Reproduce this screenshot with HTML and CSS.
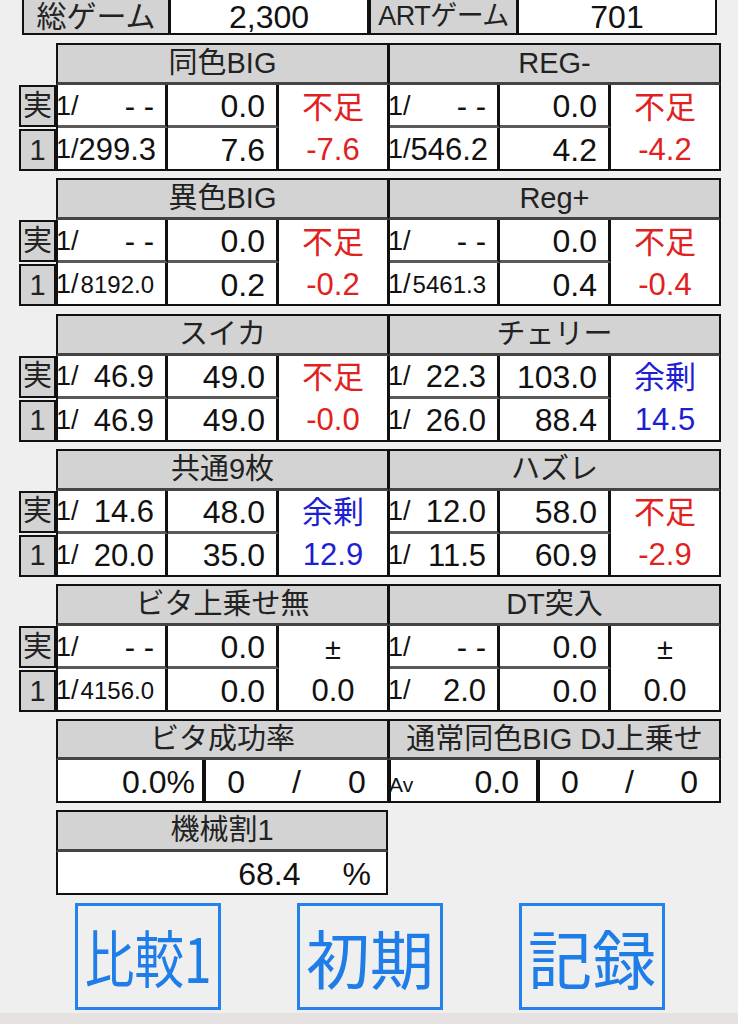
FILE: index.html
```html
<!DOCTYPE html>
<html lang="ja">
<head>
<meta charset="utf-8">
<title>データ</title>
<link rel="stylesheet" href="styles.css">
</head>
<body>
<div class="page">
  <div class="top">
    <div class="lab l1">総ゲーム</div>
    <div class="val v1">2,300</div>
    <div class="lab l2">ARTゲーム</div>
    <div class="val v2">701</div>
  </div>

  <div class="blocks">
    <section class="blk">
      <div class="hrow"><div class="hdr">同色BIG</div><div class="hdr">REG-</div></div>
      <div class="body">
        <div class="side"><div class="sc">実</div><div class="sc">1</div></div>
        <div class="half">
          <div class="c1 r1"><span class="p">1/</span><span class="v">- -</span></div>
          <div class="c2 r1">0.0</div>
          <div class="c3 red"><span>不足</span><span>-7.6</span></div>
          <div class="c1"><span class="p">1/</span><span class="v">299.3</span></div>
          <div class="c2">7.6</div>
        </div>
        <div class="half">
          <div class="c1 r1"><span class="p">1/</span><span class="v">- -</span></div>
          <div class="c2 r1">0.0</div>
          <div class="c3 red"><span>不足</span><span>-4.2</span></div>
          <div class="c1"><span class="p">1/</span><span class="v">546.2</span></div>
          <div class="c2">4.2</div>
        </div>
      </div>
    </section>

    <section class="blk">
      <div class="hrow"><div class="hdr">異色BIG</div><div class="hdr">Reg+</div></div>
      <div class="body">
        <div class="side"><div class="sc">実</div><div class="sc">1</div></div>
        <div class="half">
          <div class="c1 r1"><span class="p">1/</span><span class="v">- -</span></div>
          <div class="c2 r1">0.0</div>
          <div class="c3 red"><span>不足</span><span>-0.2</span></div>
          <div class="c1"><span class="p">1/</span><span class="v s">8192.0</span></div>
          <div class="c2">0.2</div>
        </div>
        <div class="half">
          <div class="c1 r1"><span class="p">1/</span><span class="v">- -</span></div>
          <div class="c2 r1">0.0</div>
          <div class="c3 red"><span>不足</span><span>-0.4</span></div>
          <div class="c1"><span class="p">1/</span><span class="v s">5461.3</span></div>
          <div class="c2">0.4</div>
        </div>
      </div>
    </section>

    <section class="blk">
      <div class="hrow"><div class="hdr">スイカ</div><div class="hdr">チェリー</div></div>
      <div class="body">
        <div class="side"><div class="sc">実</div><div class="sc">1</div></div>
        <div class="half">
          <div class="c1 r1"><span class="p">1/</span><span class="v">46.9</span></div>
          <div class="c2 r1">49.0</div>
          <div class="c3 red"><span>不足</span><span>-0.0</span></div>
          <div class="c1"><span class="p">1/</span><span class="v">46.9</span></div>
          <div class="c2">49.0</div>
        </div>
        <div class="half">
          <div class="c1 r1"><span class="p">1/</span><span class="v">22.3</span></div>
          <div class="c2 r1">103.0</div>
          <div class="c3 blue"><span>余剰</span><span>14.5</span></div>
          <div class="c1"><span class="p">1/</span><span class="v">26.0</span></div>
          <div class="c2">88.4</div>
        </div>
      </div>
    </section>

    <section class="blk">
      <div class="hrow"><div class="hdr">共通9枚</div><div class="hdr">ハズレ</div></div>
      <div class="body">
        <div class="side"><div class="sc">実</div><div class="sc">1</div></div>
        <div class="half">
          <div class="c1 r1"><span class="p">1/</span><span class="v">14.6</span></div>
          <div class="c2 r1">48.0</div>
          <div class="c3 blue"><span>余剰</span><span>12.9</span></div>
          <div class="c1"><span class="p">1/</span><span class="v">20.0</span></div>
          <div class="c2">35.0</div>
        </div>
        <div class="half">
          <div class="c1 r1"><span class="p">1/</span><span class="v">12.0</span></div>
          <div class="c2 r1">58.0</div>
          <div class="c3 red"><span>不足</span><span>-2.9</span></div>
          <div class="c1"><span class="p">1/</span><span class="v">11.5</span></div>
          <div class="c2">60.9</div>
        </div>
      </div>
    </section>

    <section class="blk">
      <div class="hrow"><div class="hdr">ビタ上乗せ無</div><div class="hdr">DT突入</div></div>
      <div class="body">
        <div class="side"><div class="sc">実</div><div class="sc">1</div></div>
        <div class="half">
          <div class="c1 r1"><span class="p">1/</span><span class="v">- -</span></div>
          <div class="c2 r1">0.0</div>
          <div class="c3"><span class="pm">±</span><span>0.0</span></div>
          <div class="c1"><span class="p">1/</span><span class="v s">4156.0</span></div>
          <div class="c2">0.0</div>
        </div>
        <div class="half">
          <div class="c1 r1"><span class="p">1/</span><span class="v">- -</span></div>
          <div class="c2 r1">0.0</div>
          <div class="c3"><span class="pm">±</span><span>0.0</span></div>
          <div class="c1"><span class="p">1/</span><span class="v">2.0</span></div>
          <div class="c2">0.0</div>
        </div>
      </div>
    </section>

    <section class="blk6">
      <div class="hrow"><div class="hdr">ビタ成功率</div><div class="hdr">通常同色BIG DJ上乗せ</div></div>
      <div class="vrow">
        <div class="w w1">0.0%</div>
        <div class="w w2 ratio"><span>0</span><span>/</span><span>0</span></div>
        <div class="w w3"><span class="av">Av</span><span>0.0</span></div>
        <div class="w w4 ratio"><span>0</span><span>/</span><span>0</span></div>
      </div>
    </section>

    <section class="blk7">
      <div class="hdr single">機械割1</div>
      <div class="wr"><span>68.4</span><span class="pct">%</span></div>
    </section>
  </div>

  <div class="btns">
    <div class="btn"><span class="narrow">比較1</span></div>
    <div class="btn">初期</div>
    <div class="btn">記録</div>
  </div>
  <div class="strip"></div>
</div>
</body>
</html>
```
FILE: styles.css
```css
* { box-sizing: border-box; margin: 0; padding: 0; }
html, body { background: #efeff0; }
body {
  font-family: "Liberation Sans", "Noto Sans CJK JP", sans-serif;
  color: #111;
  width: 738px;
  height: 1024px;
  overflow: hidden;
}
.page { width: 738px; height: 1024px; overflow: hidden; }

/* top row */
.top { display: flex; margin-left: 22px; height: 35px; }
.top .lab, .top .val {
  border: 2px solid #111;
  border-top: 0;
  height: 35px;
  display: flex;
  align-items: center;
  justify-content: center;
  line-height: 1;
}
.top .lab { background: #d3d3d3; font-size: 30px; color: #222; }
.top .val { background: #fff; font-size: 32px; margin-left: -1px; }
.top .l1 { width: 148px; }
.top .v1 { width: 200px; }
.top .l2 { width: 149px; margin-left: 0; font-size: 27px; letter-spacing: -0.5px; }
.top .v2 { width: 200px; }

.blocks { margin-top: 8px; }
.blk { margin-bottom: 7.25px; }

.hrow { display: flex; margin-left: 56px; width: 665px; }
.hdr {
  flex: 1;
  height: 42px;
  background: #d3d3d3;
  border: 2px solid #111;
  border-bottom: 3px solid #444;
  font-size: 29px;
  color: #222;
  display: flex;
  align-items: center;
  justify-content: center;
  line-height: 1;
  white-space: nowrap;
}
.hdr + .hdr { margin-left: -1px; }

.body { display: flex; padding-left: 19px; }
.side { width: 37px; display: flex; flex-direction: column; gap: 2px; }
.sc {
  height: 42px;
  background: #d3d3d3;
  border: 2px solid #111;
  font-size: 29px;
  color: #222;
  display: flex;
  align-items: center;
  justify-content: center;
  line-height: 1;
}
.half {
  width: 333px;
  height: 86px;
  display: grid;
  grid-template-columns: 110px 111px 1fr;
  grid-template-rows: 43px 1fr;
  border: 2px solid #111;
  border-top: 0;
  background: #fff;
}
.half + .half { margin-left: -1px; width: 333px; }

.c1, .c2 {
  border-right: 3px solid #111;
  display: flex;
  align-items: center;
  line-height: 1;
  padding-right: 11px;
  padding-top: 2px;
}
.c1 { justify-content: space-between; }
.c2 { justify-content: flex-end; font-size: 32px; }
.r1 { border-bottom: 3px solid #5a5a5a; }
.p { font-size: 27px; margin-left: -2px; }
.v { font-size: 31px; }
.v.s { font-size: 24px; }

.c3 {
  grid-column: 3;
  grid-row: 1 / span 2;
  display: grid;
  grid-template-rows: 1fr 1fr;
  font-size: 31px;
  line-height: 1;
}
.c3 span { display: flex; align-items: center; justify-content: center; padding-top: 2px; }
.c3 .pm { font-size: 29px; padding-top: 4px; }
.red { color: #e0211d; }
.blue { color: #1e1ed2; }

/* block 6 */
.blk6 { margin-bottom: 7px; }
.blk6 .hdr { height: 41px; font-size: 29px; }
.vrow { display: flex; margin-left: 56px; width: 665px; height: 43px; }
.w {
  height: 43px;
  border: 2px solid #111;
  border-top: 0;
  background: #fff;
  display: flex;
  align-items: center;
  font-size: 32px;
  line-height: 1;
  padding-top: 2px;
}
.w + .w { margin-left: -1px; border-left-width: 3px; }
.w1 { width: 148px; justify-content: flex-end; padding-right: 7px; }
.w2 { width: 186px; }
.w3 { width: 150px; justify-content: space-between; padding-right: 17px; }
.w4 { width: 184px; }
.ratio { display: grid; grid-template-columns: 1fr 1fr 1fr; }
.ratio span { text-align: center; }
.av { font-size: 21px; margin-left: -2px; padding-top: 6px; }

/* block 7 */
.blk7 { margin-left: 56px; width: 332px; }
.hdr.single { width: 332px; flex: none; height: 42px; }
.wr {
  height: 43px;
  border: 2px solid #111;
  border-top: 0;
  background: #fff;
  display: flex;
  align-items: center;
  justify-content: flex-end;
  padding-right: 15px;
  padding-top: 2px;
  font-size: 32px;
  line-height: 1;
}
.pct { margin-left: 42px; }

/* buttons */
.btns { display: flex; margin-left: 75px; gap: 76px; margin-top: 7.5px; }
.btn {
  width: 146px;
  height: 107px;
  border: 3px solid #2582ea;
  color: #1f7de8;
  font-family: "Noto Sans CJK JP", sans-serif;
  font-size: 64px;
  display: flex;
  align-items: center;
  justify-content: center;
  line-height: 1;
  white-space: nowrap;
}
.narrow { display: inline-block; font-size: 62px; transform: scaleX(0.8); }
.strip { margin-top: 3px; height: 11px; background: #e6e2e2; }
```
